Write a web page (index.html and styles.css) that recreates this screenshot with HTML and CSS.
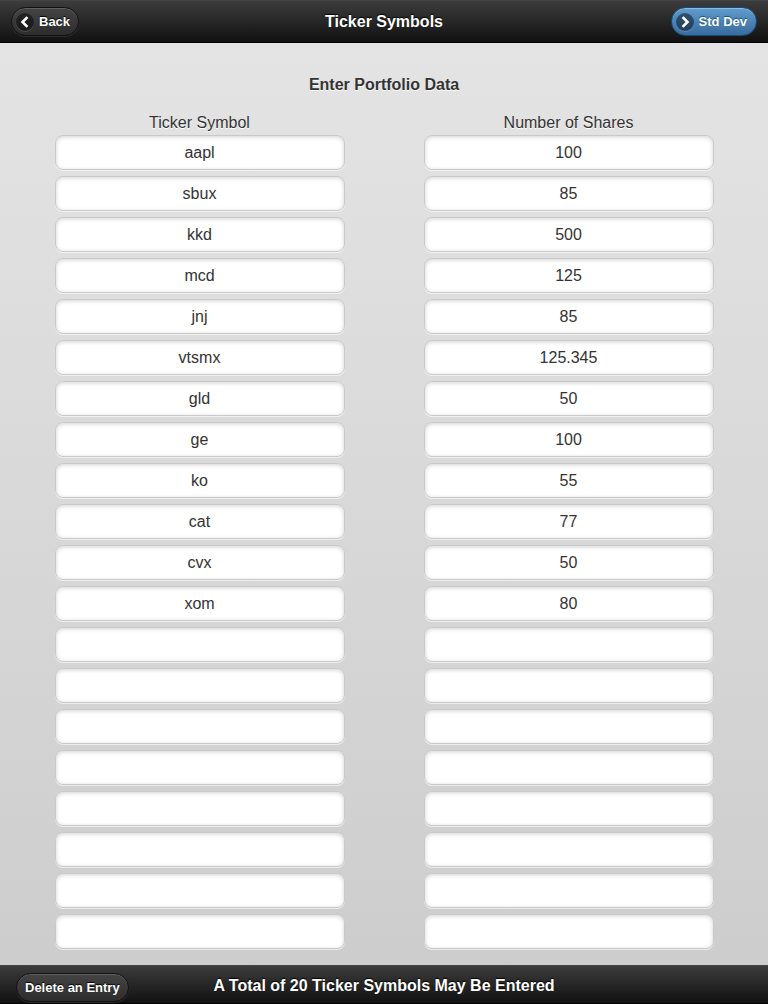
FILE: index.html
```html
<!DOCTYPE html>
<html>
<head>
<meta charset="utf-8">
<link rel="stylesheet" href="styles.css">
</head>
<body>
<div class="page">
  <header class="bar top">
    <div class="left"><a class="btn dark back"><span class="ico"><svg viewBox="0 0 18 18" width="18" height="18"><path d="M10.5 5 L6.5 9 L10.5 13" fill="none" stroke="#fff" stroke-width="2.6" stroke-linecap="square"/></svg></span>Back</a></div>
    <h1 class="title">Ticker Symbols</h1>
    <div class="right"><a class="btn blue"><span class="ico"><svg viewBox="0 0 18 18" width="18" height="18"><path d="M7.5 5 L11.5 9 L7.5 13" fill="none" stroke="#fff" stroke-width="2.6" stroke-linecap="square"/></svg></span>Std Dev</a></div>
  </header>
  <main class="content">
    <h2 class="heading">Enter Portfolio Data</h2>
    <div class="grid">
      <div class="col">
        <div class="label">Ticker Symbol</div>
        <div class="field">aapl</div>
        <div class="field">sbux</div>
        <div class="field">kkd</div>
        <div class="field">mcd</div>
        <div class="field">jnj</div>
        <div class="field">vtsmx</div>
        <div class="field">gld</div>
        <div class="field">ge</div>
        <div class="field">ko</div>
        <div class="field">cat</div>
        <div class="field">cvx</div>
        <div class="field">xom</div>
        <div class="field"></div>
        <div class="field"></div>
        <div class="field"></div>
        <div class="field"></div>
        <div class="field"></div>
        <div class="field"></div>
        <div class="field"></div>
        <div class="field"></div>
      </div>
      <div class="col">
        <div class="label">Number of Shares</div>
        <div class="field">100</div>
        <div class="field">85</div>
        <div class="field">500</div>
        <div class="field">125</div>
        <div class="field">85</div>
        <div class="field">125.345</div>
        <div class="field">50</div>
        <div class="field">100</div>
        <div class="field">55</div>
        <div class="field">77</div>
        <div class="field">50</div>
        <div class="field">80</div>
        <div class="field"></div>
        <div class="field"></div>
        <div class="field"></div>
        <div class="field"></div>
        <div class="field"></div>
        <div class="field"></div>
        <div class="field"></div>
        <div class="field"></div>
      </div>
    </div>
  </main>
  <footer class="bar bottom">
    <div class="left"><a class="btn dark small">Delete an Entry</a></div>
    <div class="title foot">A Total of 20 Ticker Symbols May Be Entered</div>
    <div class="right"></div>
  </footer>
</div>
</body>
</html>
```
FILE: styles.css
```css
* { box-sizing: border-box; }
html, body { margin: 0; padding: 0; }
body {
  font-family: "Liberation Sans", Arial, Helvetica, sans-serif;
  width: 768px;
  height: 1004px;
  overflow: hidden;
}
.page {
  display: flex;
  flex-direction: column;
  height: 1004px;
  background: linear-gradient(#e5e5e5, #cccccc);
}
.bar {
  display: grid;
  grid-template-columns: 1fr auto 1fr;
  align-items: center;
  background: linear-gradient(#3c3c3c, #111111);
  border-top: 1px solid #444;
  border-bottom: 1px solid #000;
  color: #fff;
}
.top { height: 43px; padding: 0 11px; }
.bottom { height: 39px; padding: 0 16px; margin-top: auto; }
.left { justify-self: start; }
.right { justify-self: end; }
.title {
  margin: 0;
  font-size: 16px;
  font-weight: bold;
  text-shadow: 0 -1px 1px #000;
  color: #fff;
}
.foot { font-size: 16px; position: relative; top: 1px; }
.btn {
  display: inline-flex;
  align-items: center;
  gap: 5px;
  height: 29px;
  border-radius: 15px;
  font-size: 13px;
  font-weight: bold;
  color: #fff;
  text-shadow: 0 -1px 1px #000;
  padding: 0 10px 0 4px;
}
.back { padding-right: 8px; }
.dark {
  background: linear-gradient(#444, #2d2d2d);
  border: 1px solid #111;
  box-shadow: inset 0 1px 0 rgba(255,255,255,.15), 0 1px 0 rgba(255,255,255,.1);
}
.blue {
  background: linear-gradient(#5f9ccf, #396b9e);
  border: 1px solid #145072;
  box-shadow: inset 0 1px 0 rgba(255,255,255,.3);
  text-shadow: 0 -1px 1px #145072;
  padding-right: 9px;
}
.small { height: 29px; padding: 0 8px; position: relative; top: 3px; }
.ico {
  width: 18px;
  height: 18px;
  border-radius: 50%;
  background: rgba(0,0,0,.45);
  display: inline-flex;
  box-shadow: 0 1px 0 rgba(255,255,255,.15);
}
.content {
  padding: 0 15px;
}
.heading {
  margin: 33px 0 0;
  text-align: center;
  font-size: 16px;
  font-weight: bold;
  color: #333;
  text-shadow: 0 1px 0 #fff;
  line-height: 18px;
}
.grid {
  display: grid;
  grid-template-columns: 1fr 1fr;
  margin-top: 20px;
}
.col {
  display: flex;
  flex-direction: column;
  align-items: center;
  gap: 6px;
}
.label {
  font-size: 16px;
  color: #333;
  text-shadow: 0 1px 0 #fff;
  line-height: 18px;
  margin-bottom: -3px;
}
.field {
  width: 290px;
  height: 35px;
  background: #fff;
  border: 1px solid #c9c9c9;
  border-radius: 8px;
  box-shadow: inset 0 1px 4px rgba(0,0,0,.18), 0 1px 0 rgba(255,255,255,.6);
  font-size: 16px;
  color: #333;
  display: flex;
  align-items: center;
  justify-content: center;
}
```
